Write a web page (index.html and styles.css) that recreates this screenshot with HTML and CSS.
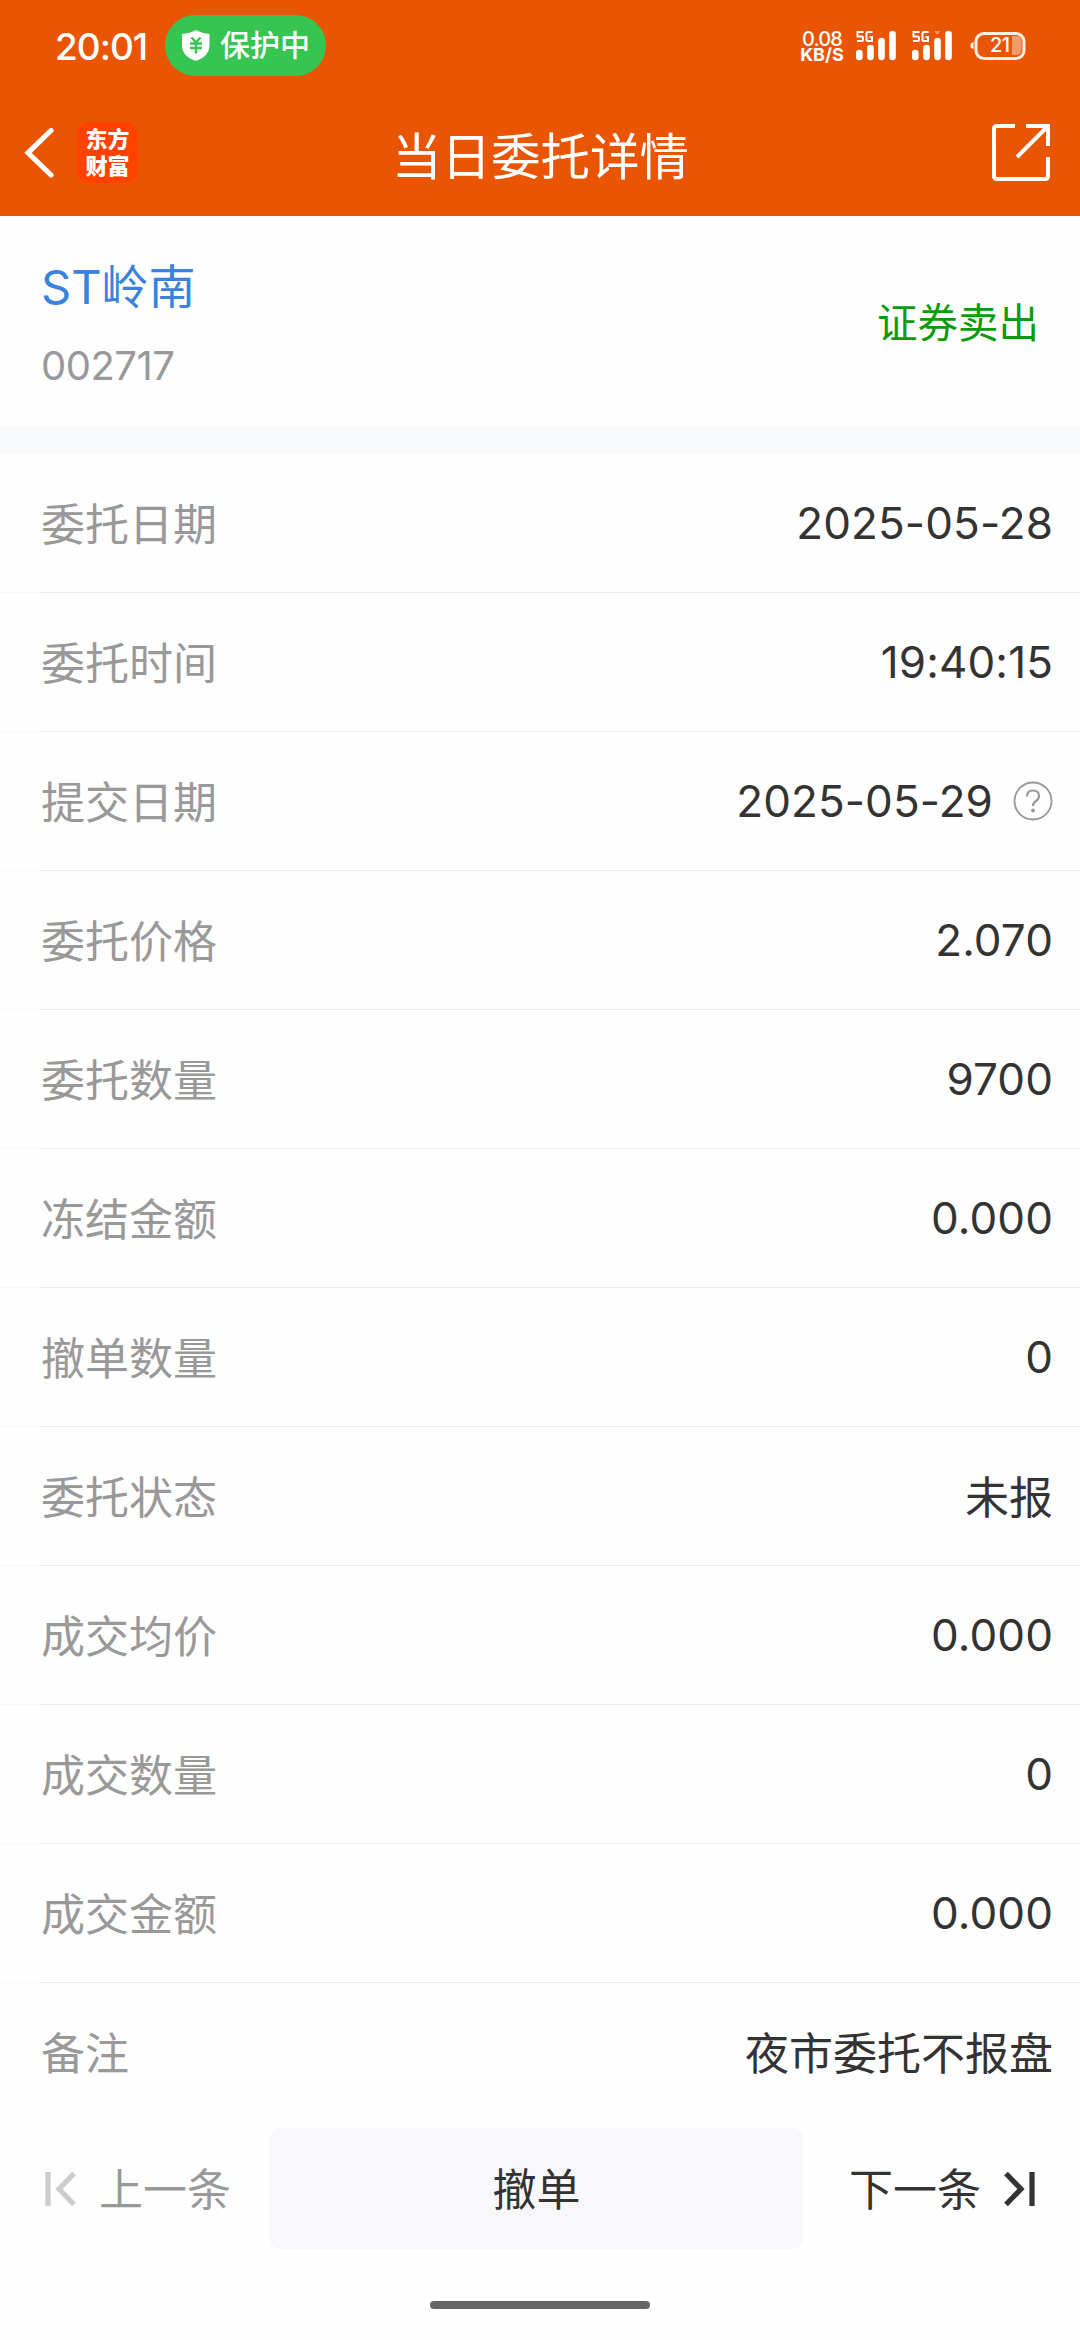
FILE: index.html
```
<!DOCTYPE html>
<html lang="zh-CN">
<head>
<meta charset="utf-8">
<title>当日委托详情</title>
<link rel="stylesheet" href="styles.css">
</head>
<body>
<header class="header">
  <div class="status">
    <span class="clock">20:01</span>
    <div class="guard">
      <svg class="shield" width="30" height="31" viewBox="0 0 30 31"><path d="M15 0Q21 3.500 28.500 4V16Q28 26.500 15 31Q1.500 26.500 1 16V4Q9 3.500 15 0Z" fill="#fff"/><path d="M10.500 7.500L15 12.500L19.500 7.500M9 13.500H21M9 18H21M15 12.500V23.500" fill="none" stroke="#37c551" stroke-width="2.400"/></svg>
      <span>保护中</span>
    </div>
    <div class="speed"><span>0.08</span><b>KB/S</b></div>
    <svg class="signal" width="42" height="32" viewBox="0 0 42 32"><g class="fiveg"><path d="M8.500 2H2.500V6.500H6.500Q8 6.500 8 8V9.500Q8 11 6.500 11H2M17.500 2H13Q11.500 2 11.500 3.500V9.500Q11.500 11 13 11H17V7H14.500"/></g><g class="bars"><path d="M4.300 23V27M15.500 18V27M26.500 11V27M37.500 4V27"/></g></svg>
    <svg class="signal second" width="42" height="32" viewBox="0 0 42 32"><g class="fiveg"><path d="M8.500 2H2.500V6.500H6.500Q8 6.500 8 8V9.500Q8 11 6.500 11H2M17.500 2H13Q11.500 2 11.500 3.500V9.500Q11.500 11 13 11H17V7H14.500"/></g><path d="M23 1H29.500L26.200 5Z" fill="#f39a68"/><g class="bars"><path d="M4.300 23V27M15.500 18V27M26.500 11V27M37.500 4V27"/></g></svg>
    <svg class="battery" width="56" height="28" viewBox="0 0 56 28"><path d="M3.500 10Q.500 10.500 .500 13.500T3.500 17Z" fill="#fff"/><rect x="6" y="1.500" width="48" height="25" rx="8" fill="none" stroke="#fff0e4" stroke-width="3"/><path d="M42 4H46Q51.500 4 51.500 9V18Q51.500 23 46 23H42Z" fill="#f29b6a"/><text x="20" y="20" class="level">21</text></svg>
  </div>
  <nav class="nav">
    <svg class="back" width="30" height="50" viewBox="0 0 30 50"><path d="M27 2.500L4 24.800L27 47" fill="none" stroke="#fff" stroke-width="5.200" stroke-linecap="round"/></svg>
    <div class="logo"><span>东方</span><span>财富</span></div>
    <h1>当日委托详情</h1>
    <svg class="share" width="60" height="60" viewBox="0 0 60 60"><path d="M24 3H6Q3 3 3 6V53Q3 56 6 56H54Q57 56 57 53V34M35 3H57V23M57 3L26 34" fill="none" stroke="#fff" stroke-width="4"/></svg>
  </nav>
</header>
<section class="stock">
  <div>
    <div class="name">ST岭南</div>
    <div class="code">002717</div>
  </div>
  <div class="side">证券卖出</div>
</section>
<main class="rows">
  <div class="row"><span>委托日期</span><b>2025-05-28</b></div>
  <div class="row"><span>委托时间</span><b>19:40:15</b></div>
  <div class="row"><span>提交日期</span><b>2025-05-29</b><svg class="help" width="40" height="40" viewBox="0 0 40 40"><circle cx="20" cy="20" r="18.500" fill="none" stroke="#999" stroke-width="1.800"/><path d="M14 15.500Q14 9.500 20 9.500T26 15Q26 18 23 20T20 25" fill="none" stroke="#999" stroke-width="2.200"/><circle cx="20" cy="29.500" r="1.900" fill="#999"/></svg></div>
  <div class="row"><span>委托价格</span><b>2.070</b></div>
  <div class="row"><span>委托数量</span><b>9700</b></div>
  <div class="row"><span>冻结金额</span><b>0.000</b></div>
  <div class="row"><span>撤单数量</span><b>0</b></div>
  <div class="row"><span>委托状态</span><b class="cjk">未报</b></div>
  <div class="row"><span>成交均价</span><b>0.000</b></div>
  <div class="row"><span>成交数量</span><b>0</b></div>
  <div class="row"><span>成交金额</span><b>0.000</b></div>
  <div class="row"><span>备注</span><b class="cjk">夜市委托不报盘</b></div>
</main>
<footer class="footer">
  <div class="prev"><svg width="32" height="36" viewBox="0 0 32 36"><path d="M3 1V35M29 2.500L14 18L29 33.500" fill="none" stroke="#ccc" stroke-width="5.200"/></svg><span>上一条</span></div>
  <button class="cancel">撤单</button>
  <div class="next"><span>下一条</span><svg width="32" height="36" viewBox="0 0 32 36"><path d="M29 1V35M3 2.500L18 18L3 33.500" fill="none" stroke="#333" stroke-width="5.200"/></svg></div>
</footer>
<div class="home"></div>
</body>
</html>
```
FILE: styles.css
```
* { box-sizing: border-box; }
body {
  margin: 0;
  width: 1080px;
  height: 2340px;
  display: flex;
  flex-direction: column;
  background: #fefefe;
  color: #333;
  font-family: Inter, "Noto Sans CJK SC", sans-serif;
  font-size: 44px;
  overflow: hidden;
}
svg { flex: none; display: block; }

.header { height: 216px; background: #ea5504; color: #fff; }
.status { height: 91px; display: flex; align-items: center; padding-left: 55px; }
.clock { width: 110px; font-size: 37px; line-height: 44px; padding-top: 3px; font-weight: 500; letter-spacing: -1px; white-space: nowrap; }
.guard {
  width: 161px; height: 61px; border-radius: 31px; background: #37c551;
  display: flex; align-items: center; gap: 9px; padding-left: 16px;
  font-size: 30px; font-weight: 500; line-height: 61px; white-space: nowrap;
}
.shield { margin-bottom: 1px; }
.speed {
  margin-left: 474px; width: 44px; display: flex; flex-direction: column; align-items: center;
  font-size: 20px; letter-spacing: -.8px; line-height: 16px; font-weight: 500; padding-top: 2px;
}
.speed b { font-weight: 700; font-size: 18px; letter-spacing: 0; line-height: 16px; }
.signal { margin-left: 11px; }
.signal.second { margin-left: 14px; }
.fiveg path { fill: none; stroke: #fff; stroke-width: 2; }
.bars path { fill: none; stroke: #fff; stroke-width: 6.600; stroke-linecap: round; }
.battery { margin-left: 17px; }
.level { font: 500 20px Inter, sans-serif; fill: #fff; letter-spacing: -.5px; }

.nav { height: 125px; display: flex; align-items: flex-start; }
.back { margin: 37px 0 0 24px; }
.logo {
  margin: 31px 0 0 23px; width: 61px; height: 61px; border-radius: 12px; background: #ff4200;
  display: flex; flex-direction: column; align-items: center; padding-top: 2px;
  font-size: 22px; line-height: 27px; font-weight: 900; font-family: "Noto Sans CJK SC", sans-serif;
}
.nav h1 { margin: 30px 0 0 254px; width: 298px; font-size: 49.500px; line-height: 72px; font-weight: 400; white-space: nowrap; }
.share { margin: 32px 0 0 301px; }

.stock {
  height: 238px; border-bottom: 28px solid #f7f8fa;
  display: flex; justify-content: space-between; padding: 0 42px 0 41px;
}
.name { margin-top: 35.500px; color: #3a82dc; font-size: 47px; line-height: 70px; }
.code { margin-top: 16px; color: #999; font-size: 40px; line-height: 56px; letter-spacing: -.5px; }
.side { margin-top: 78px; margin-right: -1px; color: #0a9c0a; font-size: 40.500px; line-height: 60px; }

.rows { display: flex; flex-direction: column; }
.row {
  height: 139px; display: flex; align-items: center; padding: 0 27px 1px 41px;
  line-height: 64px;
  background: linear-gradient(90deg, #f7f7f7 41px, #ececec 41px) bottom / 100% 1px no-repeat;
}
.row:last-child { background: none; }
.row span { color: #999; flex: 1; padding-top: 4px; }
.row b { font-weight: 400; letter-spacing: .1px; }
.row b.cjk { letter-spacing: 0; padding-top: 4px; }
.help { margin-left: 20px; }

.footer { margin-top: 6px; height: 121px; display: flex; align-items: center; line-height: 64px; }
.prev, .next { display: flex; align-items: center; height: 121px; }
.prev span, .next span { padding-top: 2px; }
.prev { width: 270px; padding-left: 45px; gap: 22px; color: #999; }
.next { padding-left: 46px; gap: 22px; }
.cancel {
  width: 533px; height: 121px; border: 0; border-radius: 10px; background: #f8f8fa; color: #333;
  font: inherit; padding: 2px 0 0;
}
.home { width: 220px; height: 8px; border-radius: 4px; background: #666; margin: 52px auto 0; }
```
